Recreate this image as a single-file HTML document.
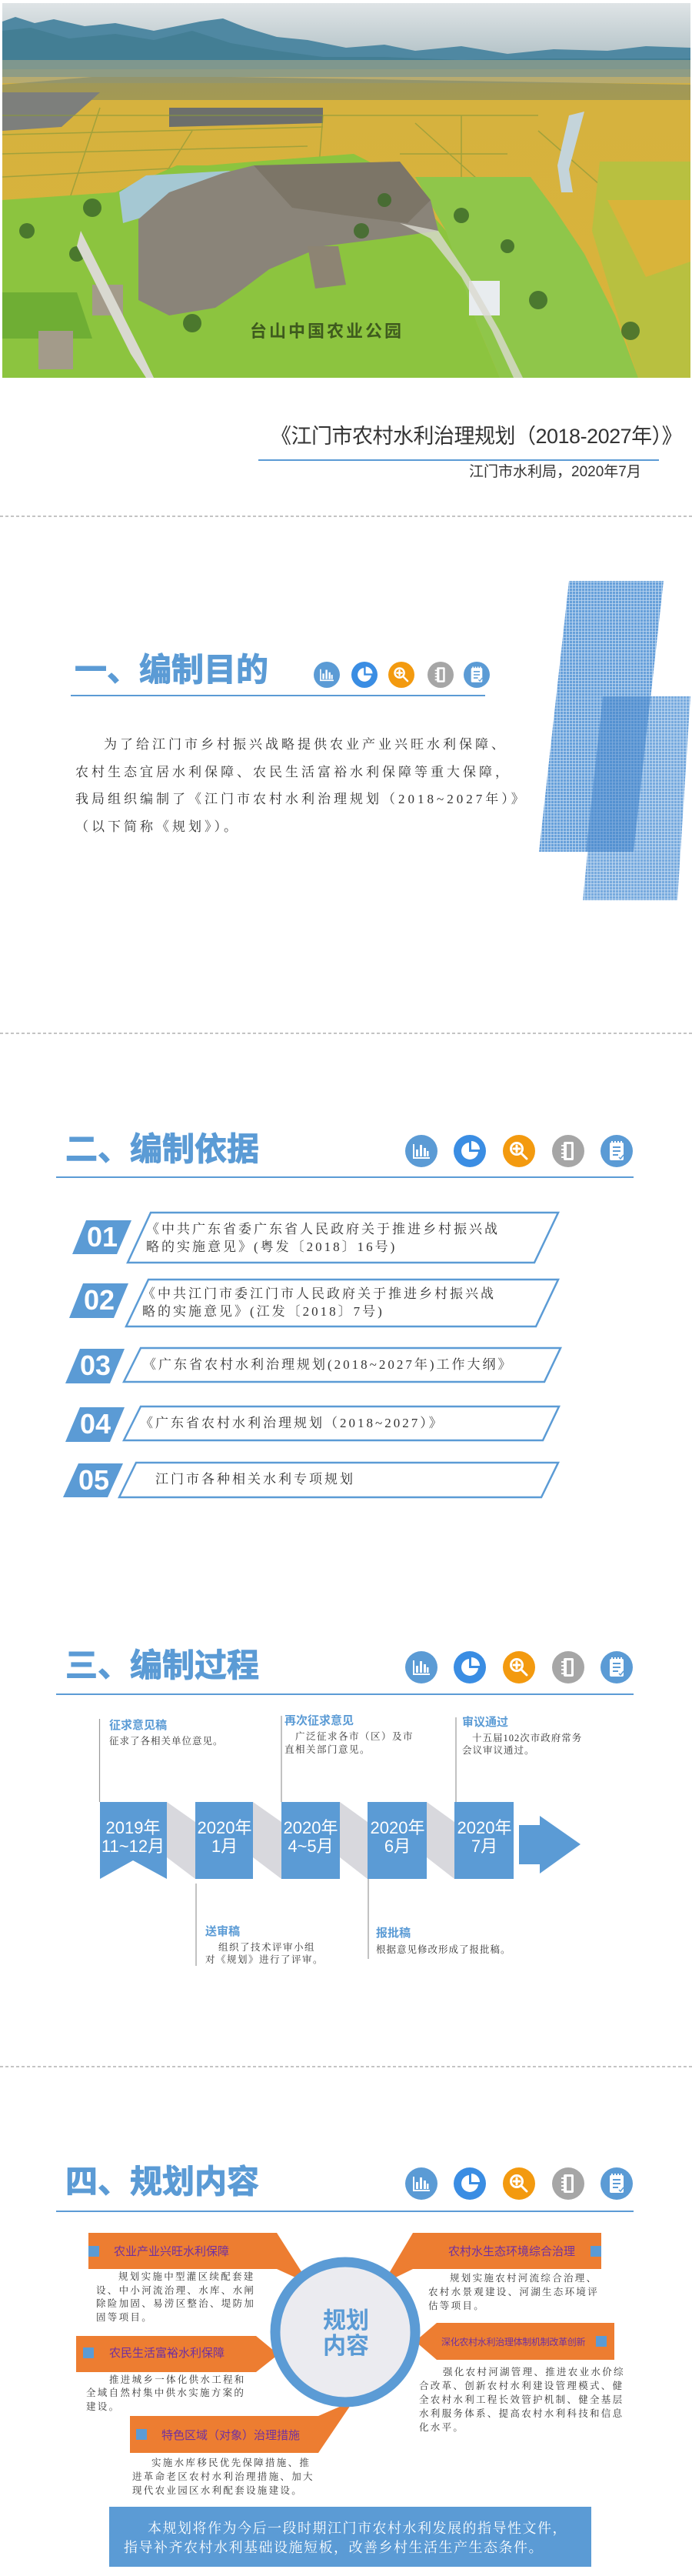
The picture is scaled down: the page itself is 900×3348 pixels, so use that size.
<!DOCTYPE html>
<html><head><meta charset="utf-8">
<style>
*{margin:0;padding:0;box-sizing:border-box}
body{width:900px;height:3348px;position:relative;background:#fff;overflow:hidden;font-family:"Liberation Sans","Noto Sans CJK SC",sans-serif}
.a{position:absolute;white-space:nowrap}
.h{font-weight:bold;color:#5b9bd5;font-size:42px;line-height:48px;font-family:"Liberation Sans","Noto Sans CJK SC",sans-serif;-webkit-text-stroke:1px #5b9bd5}
.s{font-family:"Liberation Serif","Noto Serif CJK SC",serif;color:#333}
.p{font-size:17px;letter-spacing:4px;line-height:24px}
.q{font-size:17px;letter-spacing:3px;line-height:24px}
.d{font-size:12.5px;letter-spacing:2.3px;line-height:18px}
.lb{font-size:15px;font-weight:bold;color:#5b9bd5;line-height:18px}
.o{font-size:15px;color:#7030a0;line-height:20px}
.y{color:#fff;font-size:22px;line-height:24px;text-align:center;width:90px}
.n{font-family:"Liberation Sans Narrow","Liberation Sans",sans-serif;font-weight:bold;color:#fff;font-size:36px;line-height:40px}
</style></head><body>
<svg class="a" style="left:0;top:0" width="900" height="3348" viewBox="0 0 900 3348">
<defs>
<linearGradient id="sky" x1="0" y1="0" x2="0" y2="1"><stop offset="0" stop-color="#dfe4e6"/><stop offset="1" stop-color="#b4c3c8"/></linearGradient>
<linearGradient id="fld" x1="0" y1="0" x2="0" y2="1"><stop offset="0" stop-color="#b3a87a"/><stop offset="0.25" stop-color="#d6b23e"/><stop offset="1" stop-color="#d9b43a"/></linearGradient>
<pattern id="grid" width="4" height="4" patternUnits="userSpaceOnUse"><rect width="4" height="4" fill="#5f9bd8"/><path d="M0 0.5H4M0.5 0V4" stroke="#bcd6f0" stroke-width="0.8"/></pattern>
<symbol id="i1" viewBox="-21 -21 42 42"><circle r="21" fill="#5b9bd5"/><path d="M-10 -9V9H11" stroke="#fff" stroke-width="2" fill="none"/><rect x="-7" y="-2" width="3" height="9" fill="#fff"/><rect x="-2" y="-8" width="3" height="15" fill="#fff"/><rect x="3" y="-4" width="3" height="11" fill="#fff"/><rect x="7" y="0" width="2.5" height="7" fill="#fff"/></symbol>
<symbol id="i2" viewBox="-21 -21 42 42"><circle r="21" fill="#3a8de3"/><path d="M-1 -11A11 11 0 1 0 11 1L-1 1Z" fill="#fff"/><path d="M2 -13A11 11 0 0 1 13 -2L2 -2Z" fill="#fff"/></symbol>
<symbol id="i3" viewBox="-21 -21 42 42"><circle r="21" fill="#f39a0f"/><circle cx="-3" cy="-3" r="7.5" fill="none" stroke="#fff" stroke-width="3"/><path d="M3 3L10 10M-3 -7V1M-7 -3H1" stroke="#fff" stroke-width="3" stroke-linecap="round"/></symbol>
<symbol id="i4" viewBox="-21 -21 42 42"><circle r="21" fill="#a6a6a6"/><rect x="-6" y="-12" width="13" height="24" rx="2" fill="#fff"/><rect x="-2" y="-9" width="6" height="18" fill="#a6a6a6"/><path d="M-9 -7H-4M-9 -2H-4M-9 3H-4M-9 8H-4" stroke="#fff" stroke-width="2"/></symbol>
<symbol id="i5" viewBox="-21 -21 42 42"><circle r="21" fill="#5b9bd5"/><rect x="-9" y="-11" width="18" height="23" rx="2" fill="#fff"/><path d="M-5 -5H5M-5 0H5M-5 5H2" stroke="#5b9bd5" stroke-width="2"/><path d="M-6 -13V-9M-2 -13V-9M2 -13V-9M6 -13V-9" stroke="#fff" stroke-width="2"/><path d="M3 8L5 10L9 5" stroke="#5b9bd5" stroke-width="1.5" fill="none"/></symbol>
</defs>
<!-- photo -->
<rect x="3" y="4" width="895" height="487" fill="url(#fld)"/>
<rect x="3" y="4" width="895" height="70" fill="url(#sky)"/>
<path d="M3 28L20 22L45 30L70 25L110 34L150 30L200 40L260 28L290 24L320 36L360 48L400 52L450 62L500 58L540 66L600 60L660 70L720 64L790 66L840 60L898 62V90H3Z" fill="#4f88a2"/>
<path d="M3 40L40 36L90 50L150 44L200 52L250 40L300 56L360 66L420 74L500 74L600 78L700 76L898 76V100H3Z" fill="#3e7a8f" opacity="0.7"/>
<rect x="3" y="78" width="895" height="30" fill="#a8a88a" opacity="0.6"/>
<path d="M3 110L120 100L300 100L898 110V130H3Z" fill="#6f7f6a" opacity="0.5"/>
<path d="M3 120L130 120L80 165L3 170Z" fill="#7d7f7c"/>
<path d="M220 140L420 140L420 160L220 165Z" fill="#6d6f6c"/>
<g stroke="#8a9a3a" stroke-width="1.5" opacity="0.7" fill="none">
<path d="M3 175L420 165M3 200L400 190M3 230L300 215M130 140L90 260M250 170L200 250M420 150L410 280M540 160L640 250M520 200L660 200M600 150L600 230M700 170L780 240M3 150L700 150"/>
</g>
<path d="M3 260L150 250L230 215L270 215L330 210L460 200L520 230L540 255L580 300L600 350L620 420L650 491H3Z" fill="#8cc43f"/>
<path d="M540 230L690 230L720 270L760 330L800 410L830 491H650L620 420L580 300Z" fill="#8fc64a"/>
<path d="M780 210L898 210V491H830L800 400L770 300Z" fill="#b8c040"/>
<path d="M790 260L898 260V340L840 360Z" fill="#d9b43a"/>
<path d="M3 380L100 380L120 440L3 440Z" fill="#6fae34"/>
<path d="M155 250L190 228L300 222L240 250L210 275L160 290Z" fill="#a5c8d3"/>
<path d="M180 285L220 250L290 225L330 215L420 218L480 230L530 240L560 260L570 300L500 310L420 320L350 350L310 380L280 400L220 410L180 390Z" fill="#8a8479"/>
<path d="M330 215L520 210L560 260L530 290L450 280L380 270Z" fill="#7c7567"/>
<g fill="#3f6b2a" opacity="0.85">
<circle cx="120" cy="270" r="12"/><circle cx="100" cy="330" r="10"/><circle cx="250" cy="420" r="12"/><circle cx="470" cy="300" r="10"/><circle cx="500" cy="260" r="9"/><circle cx="600" cy="280" r="10"/><circle cx="660" cy="320" r="9"/><circle cx="700" cy="390" r="12"/><circle cx="820" cy="430" r="12"/><circle cx="35" cy="300" r="10"/>
</g>
<path d="M740 150L760 145L740 220L745 250L730 250L725 215Z" fill="#c4d4da"/>
<path d="M120 370L160 370L160 410L120 410Z" fill="#a39b8a"/>
<path d="M50 430L95 430L95 480L50 480Z" fill="#a39b8a"/>
<path d="M400 320L440 320L450 370L410 375Z" fill="#8d8473"/>
<path d="M610 365L650 365L650 410L610 410Z" fill="#e8ecef"/>
<path d="M105 300L120 330L150 390L185 460L200 491H190L170 460L135 390L100 320Z" fill="#d9d9d0"/>
<path d="M520 290L570 300L610 360L650 430L680 491H668L640 430L600 360L560 310Z" fill="#d9d9d0" opacity="0.8"/>
<text x="325" y="438" font-size="22" font-weight="bold" fill="#3e5a1e" font-family="Noto Sans CJK SC,sans-serif" letter-spacing="3">台山中国农业公园</text>
<!-- header -->
<rect x="336" y="597" width="521" height="2" fill="#5b9bd5"/>
<line x1="0" y1="671" x2="900" y2="671" stroke="#8a8a8a" stroke-dasharray="4 3"/>
<line x1="0" y1="1343" x2="900" y2="1343" stroke="#8a8a8a" stroke-dasharray="4 3"/>
<line x1="0" y1="2686" x2="900" y2="2686" stroke="#8a8a8a" stroke-dasharray="4 3"/>
<!-- hatch -->
<polygon points="740,755 863,755 824,1107 701,1107" fill="url(#grid)" opacity="0.95"/>
<polygon points="784,905 898,905 881,1170 758,1170" fill="url(#grid)" opacity="0.85"/>
<polygon points="784,905 846,905 824,1107 762,1107" fill="#4a88cc" opacity="0.55"/>
<!-- sec1 -->
<rect x="92" y="903" width="539" height="2" fill="#5b9bd5"/>
<use href="#i1" x="408" y="860" width="34" height="34"/><use href="#i2" x="457" y="860" width="34" height="34"/><use href="#i3" x="505" y="860" width="34" height="34"/><use href="#i4" x="556" y="860" width="34" height="34"/><use href="#i5" x="603" y="860" width="34" height="34"/>
<!-- sec2 -->
<rect x="73" y="1529" width="751" height="2" fill="#5b9bd5"/>
<g id="ic2"><use href="#i1" x="527" y="1475" width="42" height="42"/><use href="#i2" x="590" y="1475" width="42" height="42"/><use href="#i3" x="654" y="1475" width="42" height="42"/><use href="#i4" x="718" y="1475" width="42" height="42"/><use href="#i5" x="781" y="1475" width="42" height="42"/></g>
<g fill="#5b9bd5">
<polygon points="112,1586 171,1586 152,1630 94,1630"/>
<polygon points="108,1668 167,1668 148,1713 90,1713"/>
<polygon points="104,1753 162,1753 143,1798 85,1798"/>
<polygon points="104,1829 162,1829 143,1874 85,1874"/>
<polygon points="102,1902 160,1902 140,1946 82,1946"/>
</g>
<g fill="none" stroke="#5b9bd5" stroke-width="2.5">
<polygon points="196,1576 726,1576 695,1641 166,1641"/>
<polygon points="193,1663 726,1663 697,1724 164,1724"/>
<polygon points="183,1752 729,1752 708,1796 161,1796"/>
<polygon points="183,1828 727,1828 706,1872 161,1872"/>
<polygon points="177,1901 726,1901 704,1946 155,1946"/>
</g>
<!-- sec3 -->
<rect x="73" y="2201" width="751" height="2" fill="#5b9bd5"/>
<use href="#ic2" y="671"/>
<g fill="#d8d8dd">
<polygon points="217,2342 254,2368 254,2442 217,2414"/>
<polygon points="329,2342 366,2368 366,2442 329,2414"/>
<polygon points="442,2342 478,2368 478,2442 442,2414"/>
<polygon points="555,2342 591,2368 591,2442 555,2414"/>
</g>
<g fill="#5b9bd5">
<polygon points="130,2342 217,2342 217,2442 173,2418 130,2442"/>
<rect x="254" y="2342" width="75" height="100"/>
<rect x="366" y="2342" width="76" height="100"/>
<rect x="478" y="2342" width="77" height="100"/>
<rect x="591" y="2342" width="77" height="100"/>
<polygon points="675,2372 702,2372 702,2360 755,2397 702,2435 702,2423 675,2423"/>
</g>
<g stroke="#999" stroke-width="1.2">
<line x1="129.5" y1="2234" x2="129.5" y2="2342"/>
<line x1="255" y1="2448" x2="255" y2="2555"/>
<line x1="366" y1="2230" x2="366" y2="2342"/>
<line x1="479" y1="2442" x2="479" y2="2546"/>
<line x1="593" y1="2232" x2="593" y2="2342"/>
</g>
<!-- sec4 -->
<rect x="73" y="2873" width="751" height="2" fill="#5b9bd5"/>
<use href="#ic2" y="1342"/>
<g fill="#ed7d31">
<polygon points="115,2902 360,2902 402,2968 360,2949 115,2949"/>
<polygon points="498,2968 537,2902 782,2902 782,2949 537,2949"/>
<polygon points="99,3036 333,3036 362,3060 333,3083 99,3083"/>
<polygon points="540,3043 568,3019 799,3019 799,3067 568,3067"/>
<polygon points="169,3140 414,3140 460,3120 414,3188 169,3188"/>
</g>
<g fill="#5b9bd5">
<rect x="115" y="2919" width="14" height="14"/>
<rect x="768" y="2919" width="14" height="14"/>
<rect x="108" y="3051" width="14" height="14"/>
<rect x="775" y="3036" width="14" height="14"/>
<rect x="177" y="3157" width="14" height="14"/>
</g>
<circle cx="449" cy="3031" r="91" fill="#ebebf0" stroke="#5b9bd5" stroke-width="13"/>
<rect x="142" y="3258" width="627" height="78" fill="#5b9bd5"/>
</svg>

<div class="a" style="left:352px;top:551px;font-size:27px;color:#333;line-height:32px;letter-spacing:-0.5px">《江门市农村水利治理规划（2018-2027年）》</div>
<div class="a" style="left:610px;top:602px;font-size:19px;color:#333;line-height:24px">江门市水利局，2020年7月</div>

<div class="a h" style="left:97px;top:847px">一、编制目的</div>
<div class="a s p" style="left:135px;top:956px">为了给江门市乡村振兴战略提供农业产业兴旺水利保障、</div>
<div class="a s p" style="left:98px;top:992px">农村生态宜居水利保障、农民生活富裕水利保障等重大保障，</div>
<div class="a s p" style="left:98px;top:1027px">我局组织编制了《江门市农村水利治理规划（2018~2027年）》</div>
<div class="a s p" style="left:98px;top:1063px">（以下简称《规划》）。</div>

<div class="a h" style="left:85px;top:1470px">二、编制依据</div>
<div class="a n" style="left:113px;top:1588px">01</div>
<div class="a n" style="left:109px;top:1670px">02</div>
<div class="a n" style="left:104px;top:1755px">03</div>
<div class="a n" style="left:104px;top:1831px">04</div>
<div class="a n" style="left:102px;top:1904px">05</div>
<div class="a s q" style="left:190px;top:1586px">《中共广东省委广东省人民政府关于推进乡村振兴战</div>
<div class="a s q" style="left:190px;top:1609px">略的实施意见》(粤发〔2018〕16号)</div>
<div class="a s q" style="left:185px;top:1670px">《中共江门市委江门市人民政府关于推进乡村振兴战</div>
<div class="a s q" style="left:185px;top:1693px">略的实施意见》(江发〔2018〕7号)</div>
<div class="a s q" style="left:186px;top:1762px">《广东省农村水利治理规划(2018~2027年)工作大纲》</div>
<div class="a s q" style="left:182px;top:1838px">《广东省农村水利治理规划（2018~2027）》</div>
<div class="a s q" style="left:202px;top:1911px">江门市各种相关水利专项规划</div>

<div class="a h" style="left:85px;top:2141px">三、编制过程</div>
<div class="a y" style="left:128px;top:2364px">2019年</div>
<div class="a y" style="left:128px;top:2388px">11~12月</div>
<div class="a y" style="left:247px;top:2364px">2020年</div>
<div class="a y" style="left:247px;top:2388px">1月</div>
<div class="a y" style="left:359px;top:2364px">2020年</div>
<div class="a y" style="left:359px;top:2388px">4~5月</div>
<div class="a y" style="left:472px;top:2364px">2020年</div>
<div class="a y" style="left:472px;top:2388px">6月</div>
<div class="a y" style="left:585px;top:2364px">2020年</div>
<div class="a y" style="left:585px;top:2388px">7月</div>
<div class="a lb" style="left:142px;top:2234px">征求意见稿</div>
<div class="a s d" style="left:142px;top:2254px;letter-spacing:1px">征求了各相关单位意见。</div>
<div class="a lb" style="left:370px;top:2228px">再次征求意见</div>
<div class="a s d" style="left:384px;top:2248px;letter-spacing:1.5px">广泛征求各市（区）及市</div>
<div class="a s d" style="left:370px;top:2265px;letter-spacing:1.5px">直相关部门意见。</div>
<div class="a lb" style="left:601px;top:2230px">审议通过</div>
<div class="a s d" style="left:614px;top:2250px;letter-spacing:1px">十五届102次市政府常务</div>
<div class="a s d" style="left:601px;top:2266px;letter-spacing:1px">会议审议通过。</div>
<div class="a lb" style="left:267px;top:2502px">送审稿</div>
<div class="a s d" style="left:284px;top:2522px;letter-spacing:1.5px">组织了技术评审小组</div>
<div class="a s d" style="left:267px;top:2538px;letter-spacing:1.5px">对《规划》进行了评审。</div>
<div class="a lb" style="left:489px;top:2504px">报批稿</div>
<div class="a s d" style="left:489px;top:2525px;letter-spacing:1px">根据意见修改形成了报批稿。</div>

<div class="a h" style="left:85px;top:2812px">四、规划内容</div>
<div class="a o" style="left:148px;top:2917px">农业产业兴旺水利保障</div>
<div class="a o" style="left:583px;top:2917px">农村水生态环境综合治理</div>
<div class="a o" style="left:142px;top:3049px">农民生活富裕水利保障</div>
<div class="a o" style="left:574px;top:3034px;font-size:12px;letter-spacing:-0.3px">深化农村水利治理体制机制改革创新</div>
<div class="a o" style="left:210px;top:3156px">特色区域（对象）治理措施</div>
<div class="a" style="left:420px;top:3000px;font-size:30px;font-weight:bold;color:#5b9bd5;line-height:33px;text-align:center;width:60px;white-space:normal">规划内容</div>

<div class="a s d" style="left:154px;top:2950px">规划实施中型灌区续配套建</div>
<div class="a s d" style="left:125px;top:2968px">设、中小河流治理、水库、水闸</div>
<div class="a s d" style="left:125px;top:2985px">除险加固、易涝区整治、堤防加</div>
<div class="a s d" style="left:125px;top:3003px">固等项目。</div>
<div class="a s d" style="left:585px;top:2952px">规划实施农村河流综合治理、</div>
<div class="a s d" style="left:557px;top:2970px">农村水景观建设、河湖生态环境评</div>
<div class="a s d" style="left:557px;top:2988px">估等项目。</div>
<div class="a s d" style="left:142px;top:3084px">推进城乡一体化供水工程和</div>
<div class="a s d" style="left:112px;top:3101px">全域自然村集中供水实施方案的</div>
<div class="a s d" style="left:112px;top:3119px">建设。</div>
<div class="a s d" style="left:576px;top:3074px">强化农村河湖管理、推进农业水价综</div>
<div class="a s d" style="left:545px;top:3092px">合改革、创新农村水利建设管理模式、健</div>
<div class="a s d" style="left:545px;top:3110px">全农村水利工程长效管护机制、健全基层</div>
<div class="a s d" style="left:545px;top:3128px">水利服务体系、提高农村水利科技和信息</div>
<div class="a s d" style="left:545px;top:3146px">化水平。</div>
<div class="a s d" style="left:197px;top:3192px">实施水库移民优先保障措施、推</div>
<div class="a s d" style="left:172px;top:3210px">进革命老区农村水利治理措施、加大</div>
<div class="a s d" style="left:172px;top:3228px">现代农业园区水利配套设施建设。</div>

<div class="a s" style="left:192px;top:3274px;color:#fff;font-size:18px;letter-spacing:1.5px;line-height:24px">本规划将作为今后一段时期江门市农村水利发展的指导性文件，</div>
<div class="a s" style="left:161px;top:3299px;color:#fff;font-size:18px;letter-spacing:1.5px;line-height:24px">指导补齐农村水利基础设施短板，改善乡村生活生产生态条件。</div>
</body></html>
